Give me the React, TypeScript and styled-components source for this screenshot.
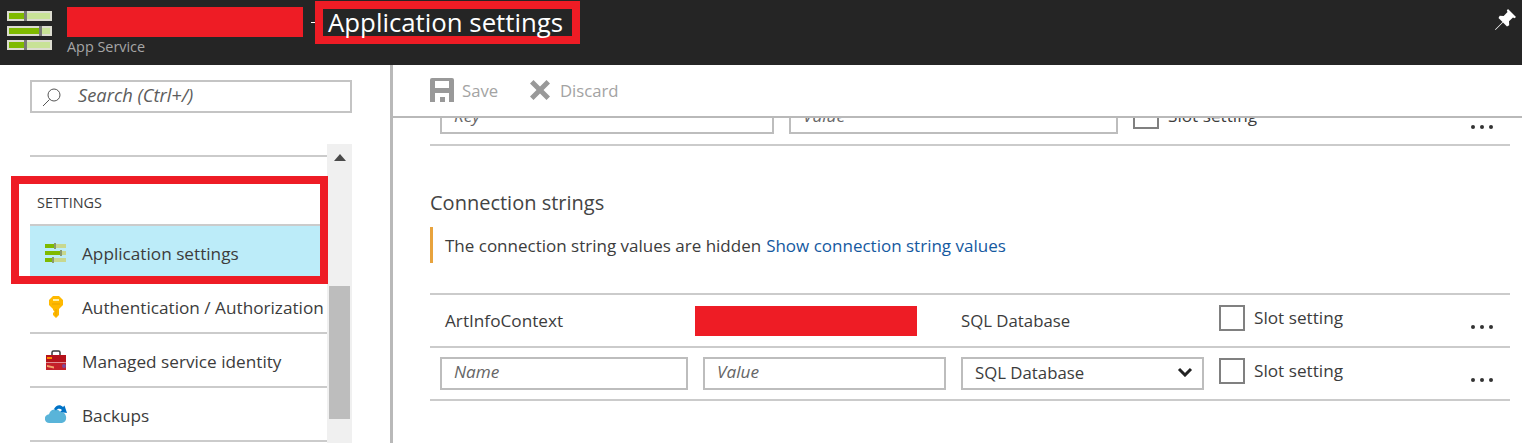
import React from 'react';
import styled, { createGlobalStyle } from 'styled-components';

const GlobalStyle = createGlobalStyle`
	html, body {
		margin: 0;
		padding: 0;
		background: #fff;
	}
	* {
		box-sizing: border-box;
	}
`;

const Page = styled.div`
	width: 1522px;
	height: 443px;
	overflow: hidden;
	display: flex;
	flex-direction: column;
	font-family: 'Open Sans', 'Liberation Sans', sans-serif;
	color: #3c3c3c;
`;

const Header = styled.header`
	height: 65px;
	flex: none;
	background: #252525;
	display: flex;
	align-items: flex-start;
	padding: 1px 6px 0 7px;
`;

const Logo = styled.svg`
	width: 45px;
	height: 39px;
	margin: 10px 15px 0 0;
	flex: none;
`;

const Brand = styled.div`
	width: 236px;
	padding-top: 6px;
	flex: none;
`;

const Redacted = styled.div<{ $w: number; $h: number }>`
	width: ${p => p.$w}px;
	height: ${p => p.$h}px;
	background: #ee1c25;
	flex: none;
`;

const BrandSub = styled.div`
	font-size: 14.4px;
	line-height: 18px;
	margin-top: 1px;
	color: #a6a6a6;
`;

const Dash = styled.div`
	width: 4px;
	height: 1px;
	margin: 21px 4px 0 8px;
	background: #fff;
	flex: none;
`;

const TitleBox = styled.div`
	margin-left: -4px;
	width: 265px;
	height: 43px;
	border: 8px solid #ee1c25;
	color: #fff;
	font-size: 25.8px;
	line-height: 27px;
	padding-left: 5px;
	white-space: nowrap;
`;

const PinIcon = styled.svg`
	width: 21px;
	height: 21px;
	margin: 8px 0 0 auto;
	flex: none;
`;

const Body = styled.div`
	flex: 1;
	display: flex;
	min-height: 0;
`;

const Sidebar = styled.aside`
	width: 393px;
	flex: none;
	border-right: 3px solid #b9b9b9;
	padding: 15px 0 0 30px;
	display: flex;
	flex-direction: column;
`;

const SearchBox = styled.div`
	width: 322px;
	height: 33px;
	border: 2px solid #c4c4c4;
	display: flex;
	align-items: center;
	padding: 0 0 0 10px;
	flex: none;
`;

const SearchGlyph = styled.svg`
	width: 20px;
	height: 20px;
	margin-right: 16px;
	flex: none;
`;

const SearchText = styled.span`
	font-size: 18.3px;
	font-style: italic;
	color: #5c5c5c;
	margin-bottom: 4px;
`;

const ListArea = styled.div`
	margin-top: 31px;
	position: relative;
	flex: 1;
	display: flex;
	min-height: 0;
`;

const Nav = styled.nav`
	width: 297px;
	flex: none;
`;

const NavTop = styled.div`
	height: 13px;
	border-bottom: 2px solid #cbcbcb;
`;

const SectionLabel = styled.div`
	height: 69px;
	border-bottom: 2px solid #cbcbcb;
	padding: 37px 0 0 7px;
	font-size: 14.4px;
	line-height: 18px;
	color: #3c3c3c;
`;

const NavItem = styled.div<{ $active?: boolean }>`
	height: 54px;
	display: flex;
	align-items: center;
	padding: 2px 0 0 15px;
	gap: 15px;
	font-size: 17.2px;
	white-space: nowrap;
	border-bottom: 2px solid ${p => (p.$active ? '#bcecf9' : '#cbcbcb')};
	background: ${p => (p.$active ? '#bcecf9' : 'transparent')};
`;

const NavIcon = styled.svg`
	width: 22px;
	height: 22px;
	flex: none;
`;

const Scrollbar = styled.div`
	width: 25px;
	flex: none;
	background: #f0f0f0;
	display: flex;
	flex-direction: column;
	align-items: center;
`;

const ScrollArrow = styled.div`
	width: 0;
	height: 0;
	margin-top: 10px;
	border-left: 6px solid transparent;
	border-right: 6px solid transparent;
	border-bottom: 7px solid #4a4a4a;
`;

const ScrollThumb = styled.div`
	width: 21px;
	height: 133px;
	margin-top: 125px;
	background: #bdbdbd;
`;

const Highlight = styled.div`
	position: absolute;
	left: -19px;
	top: 32px;
	width: 317px;
	height: 108px;
	border: 8px solid #ee1c25;
	pointer-events: none;
`;

const Main = styled.main`
	flex: 1;
	display: flex;
	flex-direction: column;
	min-width: 0;
`;

const Toolbar = styled.div`
	height: 53px;
	flex: none;
	border-bottom: 2px solid #b9b9b9;
	display: flex;
	align-items: center;
	padding: 0 0 1px 37px;
`;

const ToolButton = styled.div<{ $gap: number; $width: number }>`
	display: flex;
	align-items: center;
	gap: ${p => p.$gap}px;
	width: ${p => p.$width}px;
	font-size: 16.7px;
	color: #a3a3a3;
`;

const ToolIcon = styled.svg<{ $size: number }>`
	width: ${p => p.$size}px;
	height: ${p => p.$size}px;
	flex: none;
`;

const Content = styled.div`
	flex: 1;
	min-height: 0;
	overflow: hidden;
	padding: 0 12px 0 37px;
`;

const Row = styled.div<{ $columns: string; $height: number }>`
	display: grid;
	grid-template-columns: ${p => p.$columns};
	column-gap: 15px;
	align-items: center;
	height: ${p => p.$height}px;
	padding-left: 10px;
	border-bottom: 2px solid #cbcbcb;
	font-size: 17.2px;
`;

const Heading = styled.h2`
	margin: 43px 0 0;
	font-size: 20px;
	font-weight: 400;
	line-height: 28px;
	color: #444;
`;

const Notice = styled.div`
	margin-top: 10px;
	height: 36px;
	border-left: 3px solid #e8a33d;
	padding-left: 12px;
	display: flex;
	align-items: center;
	font-size: 17px;
	gap: 5px;
	margin-bottom: 30px;
`;

const NoticeLink = styled.a`
	color: #15599f;
`;

const TableTop = styled.div`
	border-top: 2px solid #cbcbcb;
`;

const Cell = styled.span`
	padding-left: 5px;
	white-space: nowrap;
`;

const DbLabel = styled.span`
	font-size: 16.8px;
	white-space: nowrap;
`;

const RedactedCell = styled(Redacted)`
	margin-left: -8px;
`;

const Field = styled.div<{ $placeholder?: boolean }>`
	height: 33px;
	border: 2px solid #bdbdbd;
	display: flex;
	align-items: center;
	justify-content: space-between;
	padding: 0 9px ${p => (p.$placeholder ? '5px' : '3px')} 12px;
	font-style: ${p => (p.$placeholder ? 'italic' : 'normal')};
	color: ${p => (p.$placeholder ? '#666' : '#3c3c3c')};
	white-space: nowrap;
`;

const ClippedField = styled(Field)`
	align-self: start;
	margin-top: -17px;
`;

const SlotCell = styled.div<{ $clipped?: boolean }>`
	display: flex;
	align-items: flex-start;
	gap: 9px;
	align-self: start;
	margin-top: ${p => (p.$clipped ? '-15px' : '10px')};
	line-height: 26px;
`;

const Check = styled.div`
	width: 26px;
	height: 26px;
	border: 2px solid #808080;
	flex: none;
`;

const MoreWrap = styled.svg<{ $top?: boolean }>`
	width: 22px;
	height: 6px;
	align-self: start;
	justify-self: end;
	margin: ${p => (p.$top ? '6px' : '29px')} 17px 0 0;
`;

const More = ({ top }: { top?: boolean }) => (
	<MoreWrap viewBox='0 0 22 6' $top={top}>
		<circle cx='2' cy='3' r='2' fill='#333' />
		<circle cx='11' cy='3' r='2' fill='#333' />
		<circle cx='20' cy='3' r='2' fill='#333' />
	</MoreWrap>
);

const SliderIcon = () => (
	<NavIcon viewBox='0 0 22 22'>
		<rect x='0' y='2' width='21' height='4' fill='#c8d88f' />
		<rect x='0' y='2' width='9' height='4' fill='#7fba00' />
		<rect x='9' y='1' width='2' height='6' fill='#8a9a70' />
		<rect x='0' y='9' width='21' height='4' fill='#c8d88f' />
		<rect x='0' y='9' width='15' height='4' fill='#7fba00' />
		<rect x='15' y='8' width='2' height='6' fill='#8a9a70' />
		<rect x='0' y='16' width='21' height='4' fill='#c8d88f' />
		<rect x='0' y='16' width='7' height='4' fill='#7fba00' />
		<rect x='7' y='15' width='2' height='6' fill='#8a9a70' />
	</NavIcon>
);

const KeyIcon = () => (
	<NavIcon viewBox='0 0 22 22'>
		<path d='M8 0h6l4 4v5l-4 4v6l-3 3-3-3v-2l1.500-1.500L8 14v-1L4 9V4z' fill='#ffb900' />
		<rect x='8' y='3' width='6' height='2' fill='#fff1a8' />
		<rect x='7' y='7.500' width='8' height='1' fill='#e8a600' />
		<rect x='10.500' y='13' width='1' height='7' fill='#e8a600' />
	</NavIcon>
);

const ToolboxIcon = () => (
	<NavIcon viewBox='0 0 22 22'>
		<path d='M7 5V2.500A1.500 1.500 0 0 1 8.500 1h5A1.500 1.500 0 0 1 15 2.500V5' fill='none' stroke='#3b3b3b' strokeWidth='1.500' />
		<rect x='1' y='5' width='20' height='7' fill='#b5121b' />
		<rect x='1' y='12.500' width='20' height='7.500' fill='#c4202a' />
		<rect x='2' y='7' width='5' height='2' fill='#ff8c00' />
		<path d='M2 15l7 1.500v2L2 17z' fill='#f2a56b' />
		<circle cx='19' cy='16' r='2' fill='#804998' />
	</NavIcon>
);

const CloudIcon = () => (
	<NavIcon viewBox='0 0 22 22'>
		<path d='M4.500 19a4.400 4.400 0 0 1-.5-8.800A6.500 6.500 0 0 1 15.500 8a5.600 5.600 0 0 1 1.500 11z' fill='#59b4d9' />
		<path d='M9 5C11 1 15 0 18 3l1.500-1.500L22 9l-7-1 2-2c-2-2-4.500-1.500-6 .5z' fill='#0072c6' />
	</NavIcon>
);

const LogoBar = ({ y, fill }: { y: number; fill: number }) => (
	<>
		<rect x='0' y={y} width='45' height='10' fill='#dcdcd0' />
		<rect x='2' y={y + 2} width='41' height='6' fill='#c8e296' />
		<rect x='2' y={y + 2} width={fill} height='6' fill='#7fba00' />
		<rect x={fill + 2} y={y} width='3' height='10' fill='#777' />
	</>
);

const App = () => {
	return (
		<>
			<GlobalStyle />
			<Page>
				<Header>
					<Logo viewBox='0 0 45 39'>
						<LogoBar y={0} fill={15} />
						<LogoBar y={15} fill={30} />
						<LogoBar y={29} fill={15} />
					</Logo>
					<Brand>
						<Redacted $w={236} $h={30} />
						<BrandSub>App Service</BrandSub>
					</Brand>
					<Dash />
					<TitleBox>Application settings</TitleBox>
					<PinIcon viewBox='0 0 21 21'>
						<path d='M13 0l8 8-1.500 1.200-1.500-.7-4 3.800.2 4L12 17.500 8 13.500 0.500 21 0 20.500 7.500 13 3.500 9l1.200-2.200 4 .2 3.800-4-.7-1.500z' fill='#fff' />
					</PinIcon>
				</Header>
				<Body>
					<Sidebar>
						<SearchBox>
							<SearchGlyph viewBox='0 0 20 20'>
								<circle cx='12' cy='8' r='6' fill='none' stroke='#555' strokeWidth='1' />
								<path d='M7.500 12.500L1 19' stroke='#555' strokeWidth='1' />
							</SearchGlyph>
							<SearchText>Search (Ctrl+/)</SearchText>
						</SearchBox>
						<ListArea>
							<Nav>
								<NavTop />
								<SectionLabel>SETTINGS</SectionLabel>
								<NavItem $active>
									<SliderIcon />
									Application settings
								</NavItem>
								<NavItem>
									<KeyIcon />
									Authentication / Authorization
								</NavItem>
								<NavItem>
									<ToolboxIcon />
									Managed service identity
								</NavItem>
								<NavItem>
									<CloudIcon />
									Backups
								</NavItem>
							</Nav>
							<Scrollbar>
								<ScrollArrow />
								<ScrollThumb />
							</Scrollbar>
							<Highlight />
						</ListArea>
					</Sidebar>
					<Main>
						<Toolbar>
							<ToolButton $gap={8} $width={100}>
								<ToolIcon $size={24} viewBox='0 0 24 24'>
									<path d='M2 0h20a2 2 0 0 1 2 2v22H0V2a2 2 0 0 1 2-2z' fill='#999' />
									<rect x='5' y='3' width='14' height='7' fill='#fff' />
									<path d='M5 24v-9h14v9h-4v-5h-5v5z' fill='#fff' />
								</ToolIcon>
								Save
							</ToolButton>
							<ToolButton $gap={10} $width={100}>
								<ToolIcon $size={20} viewBox='0 0 20 20'>
									<path d='M3.500 0L10 6.500 16.500 0 20 3.500 13.500 10 20 16.500 16.500 20 10 13.500 3.500 20 0 16.500 6.500 10 0 3.500z' fill='#999' />
								</ToolIcon>
								Discard
							</ToolButton>
						</Toolbar>
						<Content>
							<Row $columns='334px 329px 1fr 64px' $height={28}>
								<ClippedField $placeholder>Key</ClippedField>
								<ClippedField $placeholder>Value</ClippedField>
								<SlotCell $clipped>
									<Check />
									Slot setting
								</SlotCell>
								<More top />
							</Row>
							<Heading>Connection strings</Heading>
							<Notice>
								The connection string values are hidden
								<NoticeLink>Show connection string values</NoticeLink>
							</Notice>
							<TableTop />
							<Row $columns='248px 243px 243px 1fr 64px' $height={53}>
								<Cell>ArtInfoContext</Cell>
								<RedactedCell $w={222} $h={30} />
								<DbLabel>SQL Database</DbLabel>
								<SlotCell>
									<Check />
									Slot setting
								</SlotCell>
								<More />
							</Row>
							<Row $columns='248px 243px 243px 1fr 64px' $height={53}>
								<Field $placeholder>Name</Field>
								<Field $placeholder>Value</Field>
								<Field>
									<DbLabel>SQL Database</DbLabel>
									<svg width='16' height='10' viewBox='0 0 16 10'>
										<path d='M2 2l6 6 6-6' fill='none' stroke='#222' strokeWidth='3' />
									</svg>
								</Field>
								<SlotCell>
									<Check />
									Slot setting
								</SlotCell>
								<More />
							</Row>
						</Content>
					</Main>
				</Body>
			</Page>
		</>
	);
};

export default App;
